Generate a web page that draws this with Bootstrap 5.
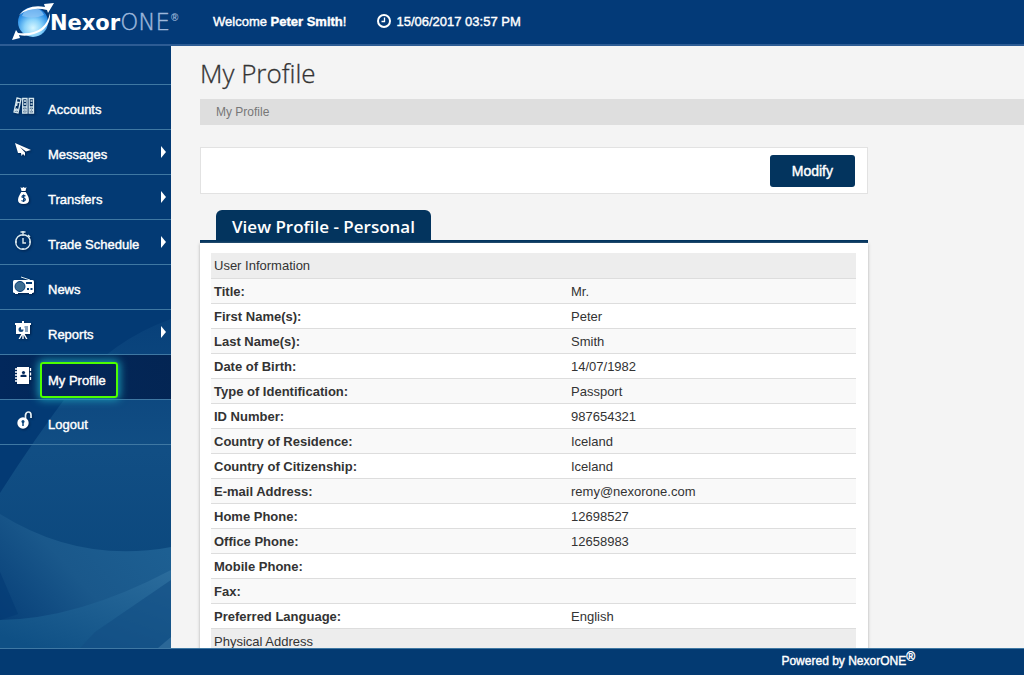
<!DOCTYPE html>
<html lang="en">
<head>
<meta charset="utf-8">
<meta name="viewport" content="width=device-width, initial-scale=1">
<title>NexorONE - My Profile</title>
<link href="https://cdn.jsdelivr.net/npm/bootstrap@5.3.0/dist/css/bootstrap.min.css" rel="stylesheet">
<style>
body{font-family:"Liberation Sans",Arial,sans-serif;font-size:13px;line-height:20px;color:#333;background:#f4f4f4}
a{text-decoration:none}
.topbar{background:#033a78;border-bottom:2px solid #2d5c94;height:46px;color:#fff}
.topbar-info,.side-link,.footbar,.btn-modify{-webkit-text-stroke:.4px #fff}
.logo-area{width:213px;color:#fff;padding-left:11px}
.logo-word{font-family:"DejaVu Sans",sans-serif;font-size:21px;line-height:20px;font-weight:700;margin-left:-5px}
.logo-one{font-weight:200;font-size:23px;color:#9db7db;-webkit-text-stroke:.4px #9db7db}
.logo-reg{font-size:10px;line-height:12px;color:#9db7db;margin:-8px 0 0 1px;font-weight:700}
.sidebar{width:171px;background:#033a74;padding-top:38px}
.side-art{z-index:0}
.side-nav{z-index:1;border-top:1px solid #3f78a3}
.side-item{border-bottom:1px solid #3f78a3}
.side-link{height:44px;color:#fff;padding:0 5px 0 12px}
.side-link:hover{color:#fff}
.side-link svg.ico{width:24px;height:24px;margin-bottom:2px;filter:drop-shadow(1px 1px 1px #00204a)}
.side-text{margin-left:12px;padding-top:6px}
.side-item.current{background:linear-gradient(90deg,#02285c,#02204ddd)}
.current .side-text{border:2px solid #4dff00;border-radius:3px;box-shadow:0 0 9px 2px #1c9bb5;padding:7px 10px 5px 6px;margin:5px 0 0 4px}
.caret-r{border:6px solid transparent;border-left:5px solid #fff;border-right:0}
.main-area{padding-left:29px}
.page-title{font-family:"Open Sans",sans-serif;font-weight:300;font-size:26px;line-height:36px;margin:9px 0 8px;-webkit-text-stroke:.3px #333}
.crumbs{background:#dedede;height:26px;padding:3px 16px;font-size:12px;margin-bottom:22px}
.crumbs a{color:#777}
.sheet{width:100%;max-width:668px}
.tools{border:1px solid #e2e2e2;height:47px;padding:0 12px;margin-bottom:16px}
.btn-modify{background:#03345e;color:#fff;font-size:14px;line-height:20px;padding:6px 22px;border-radius:3px}
.btn-modify:hover{background:#02284a;color:#fff}
.tab-row{padding-left:16px;border-bottom:3px solid #03345e}
.tab-title{background:#03345e;color:#fff;font-family:"Open Sans",sans-serif;font-weight:600;font-size:17px;line-height:30px;height:30px;padding:2px 16px 0;border-radius:6px 6px 0 0}
.panel{background:#fff;padding:10px 12px 10px 11px;box-shadow:0 1px 3px #aaa}
.info{border-collapse:collapse;table-layout:fixed}
.info th,.info td{height:25px;padding:3px 3px 1px;border-bottom:1px solid #ddd}
.info tr:nth-child(even){background:#f9f9f9}
.info tr.group{background:#ededed}
.info .group th{font-weight:400}
.info th[scope=row]{width:357px}
.footbar{background:#033a72;border-top:1px solid #3f78a3;color:#fff;height:27px;font-size:12px;line-height:24px;padding-right:109px}
.footbar sup{font-size:12px;top:-4px}
</style>
</head>
<body class="vh-100 d-flex flex-column overflow-hidden">
<svg width="0" height="0" class="position-absolute" aria-hidden="true">
<defs>
<linearGradient id="a1" x1="0" y1="0" x2="0" y2="1"><stop offset="0" stop-color="#134f86" stop-opacity=".3"/><stop offset=".4" stop-color="#114e84"/><stop offset="1" stop-color="#084479"/></linearGradient>
<linearGradient id="a2" x1="1" y1=".3" x2="0" y2="1"><stop offset="0" stop-color="#1d5f92"/><stop offset=".45" stop-color="#1a588b"/><stop offset="1" stop-color="#033a74"/></linearGradient>
<linearGradient id="a3" x1="1" y1="0" x2=".2" y2="1"><stop offset="0" stop-color="#2b6c9c"/><stop offset="1" stop-color="#0f5085"/></linearGradient>
<radialGradient id="orb" cx=".5" cy=".7" r=".7"><stop offset="0" stop-color="#d6f6ff"/><stop offset=".4" stop-color="#8cd4fb"/><stop offset=".8" stop-color="#2a8ee6"/><stop offset="1" stop-color="#1668c4"/></radialGradient>
</defs>
</svg>

<header class="topbar d-flex align-items-center flex-shrink-0">
  <a href="#" class="logo-area d-flex align-items-center flex-shrink-0" aria-label="NexorONE">
    <svg width="44" height="38" viewBox="0 0 44 38">
      <circle cx="22" cy="19" r="15" fill="url(#orb)"/>
      <path d="M11 13Q14 5 22 5Q30 5 33 12Q22 17 11 13Z" fill="#8fc6f5" opacity=".75"/>
      <path d="M8 12Q17 1 34 4L33 1L43 0L37 10L36 7Q20 3 8 12Z" fill="#fff"/>
      <path d="M39 10Q40 26 23 31Q15 34 8 32L9 35L1 37L5 27L7 30Q34 33 39 10Z" fill="#fff"/>
    </svg>
    <span class="logo-word">Nexor<span class="logo-one">ONE</span></span><span class="logo-reg">®</span>
  </a>
  <div class="topbar-info d-flex align-items-center">
    <span>Welcome <strong>Peter Smith</strong>!</span>
    <svg class="ms-4 flex-shrink-0" width="22" height="16" viewBox="0 0 22 16" fill="none" stroke="#fff"><circle cx="14" cy="7" r="6" stroke-width="2"/><path d="M14.500 3.500V7.500H11.500" stroke-width="1.300"/></svg>
    <time class="ms-1" datetime="2017-06-15T15:57">15/06/2017 03:57 PM</time>
  </div>
</header>

<div class="d-flex flex-grow-1 overflow-hidden">
  <aside class="sidebar position-relative flex-shrink-0">
    <svg class="side-art position-absolute bottom-0 start-0" width="171" height="330" viewBox="0 0 171 330" aria-hidden="true">
      <path d="M171 1Q112 22 72 71Q35 120 0 175V330H171Z" fill="url(#a1)"/>
      <path d="M0 196Q80 246 171 229V330H0Z" fill="url(#a2)"/>
      <path d="M0 254L18 296L0 302Z" fill="#033a74" opacity=".6"/>
      <path d="M0 302Q78 301 171 252V330H0Z" fill="url(#a3)"/>
      <path d="M171 262L95 314L80 330H171Z" fill="#134f84" opacity=".65"/>
      <path d="M158 330L171 319V330Z" fill="#2b6797"/>
    </svg>
    <nav class="position-relative side-nav" aria-label="Main">
      <ul class="list-unstyled mb-0">
        <li class="side-item"><a href="#" class="side-link d-flex align-items-center">
          <svg class="ico" viewBox="0 0 24 24" fill="none" stroke="#d5e7ee" stroke-width="1.300"><path d="M5 4L9 5L6 19L2 18ZM4.500 8L7.500 8.700M10.700 4.500H15V19H10.700ZM17.200 4.500H21.500V19H17.200Z"/><path d="M12 7H14M12 10H14M18.500 7H20.500M18.500 10H20.500M5 9L4.500 12" stroke-width="1.500"/><path d="M11 13H15M17 13H21"/><circle cx="12.900" cy="16" r="1.200"/><circle cx="19.300" cy="16" r="1.200"/><circle cx="4.500" cy="16" r="1"/></svg>
          <span class="side-text">Accounts</span></a></li>
        <li class="side-item"><a href="#" class="side-link d-flex align-items-center">
          <svg class="ico" viewBox="0 0 24 24" fill="#fff"><path d="M3 4L19 11L14 12.500L8 8L13 13.500L13 17L11 15L9.500 17L9 14L6 14Z"/></svg>
          <span class="side-text">Messages</span><span class="caret-r ms-auto"></span></a></li>
        <li class="side-item"><a href="#" class="side-link d-flex align-items-center">
          <svg class="ico" viewBox="0 0 24 24" fill="#fff"><path d="M8.500 3L10 4L11.500 3L13 4L14.500 3L13.500 7H9.500ZM9.300 8H13.700Q17 13 17 16Q17 20 11.500 20Q6 20 6 16Q6 13 9.300 8Z"/><path d="M13.500 12Q10 10.500 10 13Q13.500 14 13.300 16Q12 18 9.500 16.500M11.600 10.500V18" fill="none" stroke="#033a74" stroke-width="1.200"/></svg>
          <span class="side-text">Transfers</span><span class="caret-r ms-auto"></span></a></li>
        <li class="side-item"><a href="#" class="side-link d-flex align-items-center">
          <svg class="ico" viewBox="0 0 24 24" fill="none" stroke="#dcecf1" stroke-width="1.400"><circle cx="11" cy="13" r="7.300"/><path d="M8.500 3H13.500M11 2V5M16 6L18 8M11 9V14H14M11 7V6M11 20V19M4 13H5M17 13H18"/></svg>
          <span class="side-text">Trade Schedule</span><span class="caret-r ms-auto"></span></a></li>
        <li class="side-item"><a href="#" class="side-link d-flex align-items-center">
          <svg class="ico" viewBox="0 0 24 24"><path d="M9 3L18 6" stroke="#dcecf1"/><rect x="1" y="6" width="21" height="13" rx="1.500" fill="#fff"/><path d="M3 18H6V20H3ZM17 18H20V20H17Z" fill="#fff"/><circle cx="8" cy="12.500" r="5" fill="#3d6d92" stroke="#033a74"/><path d="M14 8H20V10H14ZM15 14H17V16H15ZM18.500 14H20.500V16H18.500Z" fill="#033a74"/></svg>
          <span class="side-text">News</span></a></li>
        <li class="side-item"><a href="#" class="side-link d-flex align-items-center">
          <svg class="ico" viewBox="0 0 24 24"><path d="M10 2H12V4H19V6H18V15H12.700L15.500 20H14L11.700 16V20H10.300V16L8 20H6.500L9.300 15H4V6H3V4H10Z" fill="#fff"/><path d="M9 8A2.500 2.500 0 1 0 11.500 10.500H9Z" fill="#164a80"/><path d="M12.500 8H16M13 10H16M13 12H16" stroke="#164a80"/></svg>
          <span class="side-text">Reports</span><span class="caret-r ms-auto"></span></a></li>
        <li class="side-item current"><a href="#" class="side-link d-flex align-items-center" aria-current="page">
          <svg class="ico" viewBox="0 0 24 24"><path d="M5 3H17V20H5Z" fill="#fff"/><path d="M3 5H6M3 8H6M3 11H6M3 14H6M3 17H6" stroke="#fff" stroke-width="1.300"/><path d="M18.500 4V7M18.500 8.500V11.500M18.500 13V16" stroke="#fff" stroke-width="1.300"/><circle cx="11.500" cy="8.500" r="1.600" fill="#02285c"/><path d="M8.500 13V11.200Q11.500 9.800 14.500 11.200V13Z" fill="#02285c"/></svg>
          <span class="side-text">My Profile</span></a></li>
        <li class="side-item"><a href="#" class="side-link d-flex align-items-center">
          <svg class="ico" viewBox="0 0 24 24"><path d="M13.500 10V6Q14 3 16.500 3Q19 3 19 6V9" fill="none" stroke="#e5f0f4" stroke-width="1.700"/><circle cx="11" cy="14" r="5.700" fill="#fff"/><circle cx="11" cy="12.500" r="1.500" fill="#0b4379"/><path d="M11 12V17" stroke="#0b4379" stroke-width="1.500"/></svg>
          <span class="side-text">Logout</span></a></li>
      </ul>
    </nav>
  </aside>

  <main class="main-area flex-grow-1 overflow-hidden">
    <h1 class="page-title">My Profile</h1>
    <nav class="crumbs" aria-label="Breadcrumb"><a href="#">My Profile</a></nav>
    <div class="sheet">
      <div class="tools bg-white d-flex align-items-center justify-content-end"><button type="button" class="btn border border-0 btn-modify">Modify</button></div>
      <div class="tab-row d-flex"><h2 class="tab-title mb-0">View Profile - Personal</h2></div>
      <div class="panel">
        <table class="info w-100">
          <tbody>
            <tr class="group"><th scope="row">User Information</th><td></td></tr>
            <tr><th scope="row">Title:</th><td>Mr.</td></tr>
            <tr><th scope="row">First Name(s):</th><td>Peter</td></tr>
            <tr><th scope="row">Last Name(s):</th><td>Smith</td></tr>
            <tr><th scope="row">Date of Birth:</th><td>14/07/1982</td></tr>
            <tr><th scope="row">Type of Identification:</th><td>Passport</td></tr>
            <tr><th scope="row">ID Number:</th><td>987654321</td></tr>
            <tr><th scope="row">Country of Residence:</th><td>Iceland</td></tr>
            <tr><th scope="row">Country of Citizenship:</th><td>Iceland</td></tr>
            <tr><th scope="row">E-mail Address:</th><td>remy@nexorone.com</td></tr>
            <tr><th scope="row">Home Phone:</th><td>12698527</td></tr>
            <tr><th scope="row">Office Phone:</th><td>12658983</td></tr>
            <tr><th scope="row">Mobile Phone:</th><td></td></tr>
            <tr><th scope="row">Fax:</th><td></td></tr>
            <tr><th scope="row">Preferred Language:</th><td>English</td></tr>
            <tr class="group"><th scope="row">Physical Address</th><td></td></tr>
          </tbody>
        </table>
      </div>
    </div>
  </main>
</div>

<footer class="footbar text-end flex-shrink-0">Powered by NexorONE<sup>®</sup></footer>
<script src="https://cdn.jsdelivr.net/npm/bootstrap@5.3.0/dist/js/bootstrap.bundle.min.js"></script>
</body>
</html>
